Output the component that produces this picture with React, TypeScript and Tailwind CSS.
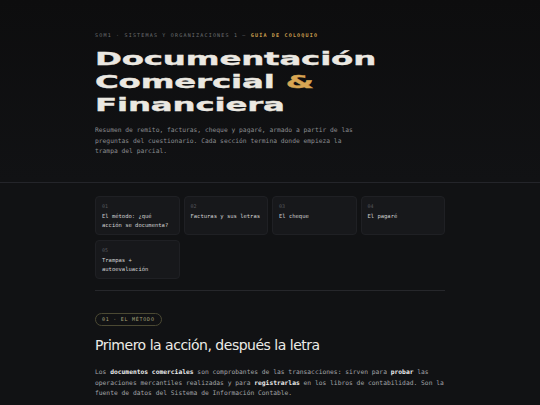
import React from 'react';

const sections = [
  { n: '01', title: 'El método: ¿qué acción se documenta?' },
  { n: '02', title: 'Facturas y sus letras' },
  { n: '03', title: 'El cheque' },
  { n: '04', title: 'El pagaré' },
  { n: '05', title: 'Trampas + autoevaluación' },
];

const mono = "font-['DejaVu_Sans_Mono','Liberation_Mono',monospace]";
const display = "font-['DejaVu_Sans','Liberation_Sans',sans-serif]";

export default function App() {
  return (
    <div className="min-h-[405px] overflow-hidden bg-[#111214] text-[#e9e6df]">
      {/* Header */}
      <header className="border-b border-[#24252a] bg-gradient-to-b from-[#0d0d0e] to-[#111214]">
        <div className="mx-auto max-w-[350px] pt-[31px] pb-[25px]">
          <p className={`${mono} text-[5px] leading-[8px] tracking-[1.2px] text-[#6d6e72] uppercase`}>
            SOM1 · Sistemas y Organizaciones 1 — <span className="font-bold text-[#c99d4e]">Guía de coloquio</span>
          </p>
          <h1
            className={`${display} mt-[8px] w-[190px] origin-left scale-x-[1.8] whitespace-nowrap text-[18px] leading-[23px] font-bold tracking-[-0.005em] text-[#ebe8e1] [-webkit-text-stroke:0.35px_#ebe8e1]`}
          >
            Documentación
            <br />
            Comercial <span className="text-[#d8a653] [-webkit-text-stroke:0.35px_#d8a653]">&amp;</span>
            <br />
            Financiera
          </h1>
          <p className={`${mono} mt-[9px] max-w-[262px] text-[6.3px] leading-[10.7px] text-[#8a8b8f]`}>
            Resumen de remito, facturas, cheque y pagaré, armado a partir de las preguntas del cuestionario. Cada sección
            termina donde empieza la trampa del parcial.
          </p>
        </div>
      </header>

      <main className="mx-auto max-w-[350px] pt-[13px]">
        {/* Index */}
        <nav className="grid grid-cols-4 gap-x-[4px] gap-y-[5px]">
          {sections.map(s => (
            <div
              key={s.n}
              className="h-[39px] rounded-[4px] border border-[#1f2024] bg-[#17181b] px-[6px] pt-[6px]"
            >
              <div className={`${mono} text-[5px] leading-[6px] text-[#55575c]`}>{s.n}</div>
              <div className={`${mono} mt-[3px] text-[5.5px] leading-[9px] text-[#d2d2d2]`}>{s.title}</div>
            </div>
          ))}
        </nav>

        <div className="mt-[11px] h-px bg-[#26272b]" />

        {/* Section 01 */}
        <section className="pt-[22px]">
          <div className="flex">
            <span
              className={`${mono} rounded-full border border-[#4b4933] px-[6px] text-[5px] leading-[11px] tracking-[0.75px] text-[#a9a47c] uppercase`}
            >
              01 · El método
            </span>
          </div>
          <h2 className={`${display} mt-[10px] w-fit text-[14px] leading-[18px] tracking-[-0.035em] text-[#ecebe6]`}>
            Primero la acción, después la letra
          </h2>
          <p className={`${mono} mt-[13px] text-[6.3px] leading-[10.4px] text-[#a2a3a7]`}>
            Los <b className="text-[#ececec]">documentos comerciales</b> son comprobantes de las transacciones: sirven
            para <b className="text-[#ececec]">probar</b> las operaciones mercantiles realizadas y para{' '}
            <b className="text-[#ececec]">registrarlas</b> en los libros de contabilidad. Son la fuente de datos del
            Sistema de Información Contable.
          </p>
        </section>
      </main>
    </div>
  );
}
